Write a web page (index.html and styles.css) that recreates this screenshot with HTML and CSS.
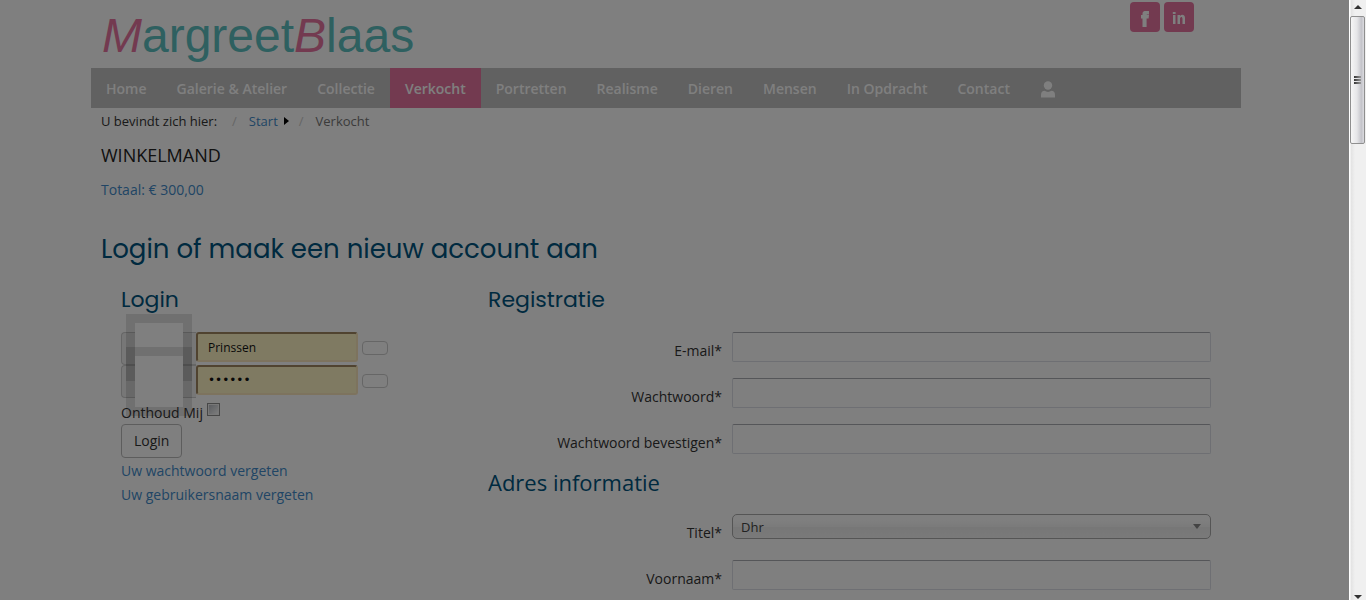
FILE: index.html
```html
<!DOCTYPE html>
<html lang="nl">
<head>
<meta charset="utf-8">
<title>MargreetBlaas - Verkocht</title>
<link rel="stylesheet" href="styles.css">
</head>
<body>
<div class="shell">
  <div class="viewport">
    <div class="container">
      <header class="site-header">
        <a class="logo" href="#"><em>M</em>argreet<em>B</em>laas</a>
        <div class="social">
          <a href="#" aria-label="Facebook"><svg viewBox="0 0 30 30"><path d="M12.500 25V16.500H11V13h1.500v-1.500C12.500 9.500 14 9 16 9h3v3.500h-1.500c-.8 0-1 .2-1 .8V13H19l-.4 3.500h-2V25z"/></svg></a>
          <a href="#" aria-label="LinkedIn"><svg viewBox="0 0 30 30"><path d="M9 13h2.500v9H9zM8.800 10h2.800v2H8.800zM13.500 13H16v1c1.500-2 5-1.500 5 2v6h-2.500v-5c0-3-2.500-2.500-2.500 0v5h-2.500z"/></svg></a>
        </div>
      </header>
      <nav class="menu">
        <a href="#">Home</a>
        <a href="#">Galerie &amp; Atelier</a>
        <a href="#">Collectie</a>
        <a class="active" href="#">Verkocht</a>
        <a href="#">Portretten</a>
        <a href="#">Realisme</a>
        <a href="#">Dieren</a>
        <a href="#">Mensen</a>
        <a href="#">In Opdracht</a>
        <a href="#">Contact</a>
        <a href="#" aria-label="Account"><svg class="user" viewBox="0 0 16 18"><circle cx="8" cy="5.500" r="4.200"/><path d="M1 17.500V15c0-3 1.500-4 3.500-4.200 2 1.500 5 1.500 7 0C13.500 11 15 12 15 15v2.500z"/></svg></a>
      </nav>
      <main class="content">
        <div class="crumbs">
          <span>U bevindt zich hier:</span>
          <span class="slash">/</span>
          <a href="#">Start</a>
          <span class="arrow"></span>
          <span class="slash">/</span>
          <span class="current">Verkocht</span>
        </div>
        <h3 class="cart-title">WINKELMAND</h3>
        <a class="cart-total" href="#">Totaal: € 300,00</a>
        <h1 class="page-title">Login of maak een nieuw account aan</h1>
        <div class="columns">
          <form class="login">
            <h2 class="section-title">Login</h2>
            <div class="groups">
              <div class="group">
                <span class="addon"></span>
                <input class="filled" type="text" value="Prinssen" aria-label="Gebruikersnaam">
                <button class="mini" type="button" aria-label="Gebruikersnaam opties"></button>
              </div>
              <div class="group">
                <span class="addon"></span>
                <input class="filled" type="password" value="geheim" aria-label="Wachtwoord">
                <button class="mini" type="button" aria-label="Wachtwoord opties"></button>
              </div>
              <div class="tip tip-first"></div>
              <div class="tip tip-second"></div>
            </div>
            <div class="remember">
              <label for="remember">Onthoud Mij</label>
              <input id="remember" type="checkbox">
            </div>
            <button class="submit" type="submit">Login</button>
            <a class="help" href="#">Uw wachtwoord vergeten</a>
            <a class="help" href="#">Uw gebruikersnaam vergeten</a>
          </form>
          <form class="register">
            <h2 class="section-title">Registratie</h2>
            <div class="field"><label for="email">E-mail*</label><input id="email" type="text"></div>
            <div class="field"><label for="pw">Wachtwoord*</label><input id="pw" type="password"></div>
            <div class="field"><label for="pw2">Wachtwoord bevestigen*</label><input id="pw2" type="password"></div>
            <h2 class="section-title address">Adres informatie</h2>
            <div class="field"><label for="title">Titel*</label>
              <div class="select"><select id="title"><option>Dhr</option><option>Mevr</option></select></div>
            </div>
            <div class="field"><label for="first">Voornaam*</label><input id="first" type="text"></div>
          </form>
        </div>
      </main>
    </div>
    <div class="backdrop"></div>
  </div>
  <div class="scrollbar">
    <span class="up"></span>
    <div class="thumb"><i></i><i></i><i></i></div>
    <span class="down"></span>
  </div>
</div>
</body>
</html>
```
FILE: styles.css
```css
* { box-sizing: border-box; }
body {
  margin: 0;
  background: #fff;
  color: #333;
  font: 14px/24px "Open Sans", "Noto Sans", sans-serif;
}
a { color: #428bca; text-decoration: none; }
h1, h2, h3 { margin: 0; font-weight: 400; }
input, button, select { font: inherit; color: inherit; }

.shell { display: flex; height: 100vh; overflow: hidden; }
.viewport { position: relative; flex: 1; overflow: hidden; padding-right: 17px; }
.backdrop { position: absolute; inset: 0; background: rgba(0, 0, 0, .5); }
.container { max-width: 1150px; margin: 0 auto; }

.site-header { display: flex; justify-content: space-between; height: 68px; padding: 2px 47px 0 11px; }
.logo { font: 48px/68px "Liberation Sans", Arial, sans-serif; color: #5cc0c0; }
.logo em { color: #e674a0; }
.social { display: flex; gap: 4px; }
.social a { width: 30px; height: 30px; border-radius: 4px; background: #e674a0; }
.social svg { display: block; fill: #fff; }

.menu { display: flex; height: 40px; background: #c2c2c2; }
.menu a { padding: 0 15px; color: #fff; font-weight: 600; line-height: 42px; }
.menu .active { background: #e674a0; }
.user { display: block; width: 16px; height: 18px; margin-top: 12px; fill: #fff; }

.content { padding: 0 10px; }
.crumbs { display: flex; align-items: center; height: 26px; font-size: 13px; }
.slash { padding: 0 12px 0 15px; color: #ccc; }
.arrow { margin-left: 6px; border: 4px solid transparent; border-left: 5px solid #000; border-right: 0; }
.arrow + .slash { padding-left: 10px; }
.current { color: #777; }
.cart-title { margin-top: 9px; font-size: 18px; color: #222; }
.cart-total { display: block; margin-top: 11px; }

.page-title, .section-title {
  color: #005580;
  font-family: Poppins, Inter, "Open Sans", sans-serif;
}
.page-title { margin-top: 27px; font-size: 26px; line-height: 40px; }
.section-title { font-size: 22px; line-height: 32px; }
.columns { display: grid; grid-template-columns: 347px 1fr; gap: 20px; padding: 15px 20px 0; }

.groups { position: relative; margin-top: 16px; }
.group { display: flex; height: 33px; }
.addon { width: 75px; border: 1px solid #ccc; border-right: 0; border-radius: 4px 0 0 4px; background: #eee; }
.filled {
  width: 162px; height: 30px; padding: 0 10px;
  border: 2px solid #fbe6bc; border-top-color: #a08660; border-left-color: #a08660;
  border-radius: 3px; background: #fff5c4; color: #111; font-size: 12px;
}
.filled[type="password"] { font-family: "DejaVu Sans", sans-serif; }
.mini { width: 26px; height: 14px; margin: 9px 0 0 4px; padding: 0; border: 1px solid #ccc; border-radius: 4px; background: #fff; }
.tip { position: absolute; left: 5px; width: 66px; border: 9px solid rgba(0, 0, 0, .12); background: #fff; background-clip: padding-box; }
.tip-first { top: -18px; height: 67px; }
.tip-second { top: 15px; height: 69px; }

.remember { display: flex; align-items: center; gap: 4px; height: 26px; }
.remember label { position: relative; padding-top: 4px; }
.remember input {
  appearance: none; width: 13px; height: 13px; margin: 0 0 4px;
  border: 1px solid #8e8f8f; background: linear-gradient(135deg, #b0b4bc, #fff); box-shadow: inset 0 0 0 1px #f0f0f0;
}
.submit { display: block; height: 34px; padding: 0 12px; border: 1px solid #bbb; border-radius: 4px; background: #fff; }
.help { display: block; }
.submit + .help { margin-top: 1px; }

.field { display: grid; grid-template-columns: 234px 1fr; column-gap: 10px; margin-bottom: 15px; }
.section-title + .field { margin-top: 16px; }
.field label { padding-top: 7px; text-align: right; }
.field > input {
  width: 100%; height: 30px; padding: 0 10px;
  border: 1px solid #dcdfe6; border-top-color: #abadb3; border-radius: 2px; background: #fff;
}
.address { margin-top: -4px; font-family: "Open Sans", sans-serif; }
.select { position: relative; height: 30px; }
.select::after { content: ""; position: absolute; right: 10px; top: 10px; border: 4px solid transparent; border-top: 5px solid #888; border-bottom: 0; }
.select select {
  appearance: none; display: block; width: 100%; height: 25px; padding: 0 8px;
  border: 1px solid #aaa; border-radius: 5px; font-size: 13px; color: #444;
  background: linear-gradient(#fff 20%, #f6f6f6 50%, #eee 52%, #f4f4f4);
}

.scrollbar {
  display: flex; flex-direction: column; align-items: center; width: 17px; padding: 5px 0 1px;
  background: linear-gradient(90deg, #fff 1px, #e3e3e3 2px, #f0f0f0 6px);
}
.up { border: 4px solid transparent; border-top: 0; border-bottom: 4px solid #333; }
.down { margin-top: auto; border: 4px solid transparent; border-bottom: 0; border-top: 4px solid #333; }
.thumb {
  display: flex; flex-direction: column; align-items: center; justify-content: center; gap: 1px;
  width: 15px; height: 128px; margin-top: 7px; border: 1px solid #8f8f8f; border-radius: 2px;
  background: linear-gradient(90deg, #f6f6f6, #e6e6e8 45%, #c4c4ca 80%, #dcdce0);
}
.thumb i { width: 7px; height: 2px; background: linear-gradient(90deg, #333, #999); }
```
